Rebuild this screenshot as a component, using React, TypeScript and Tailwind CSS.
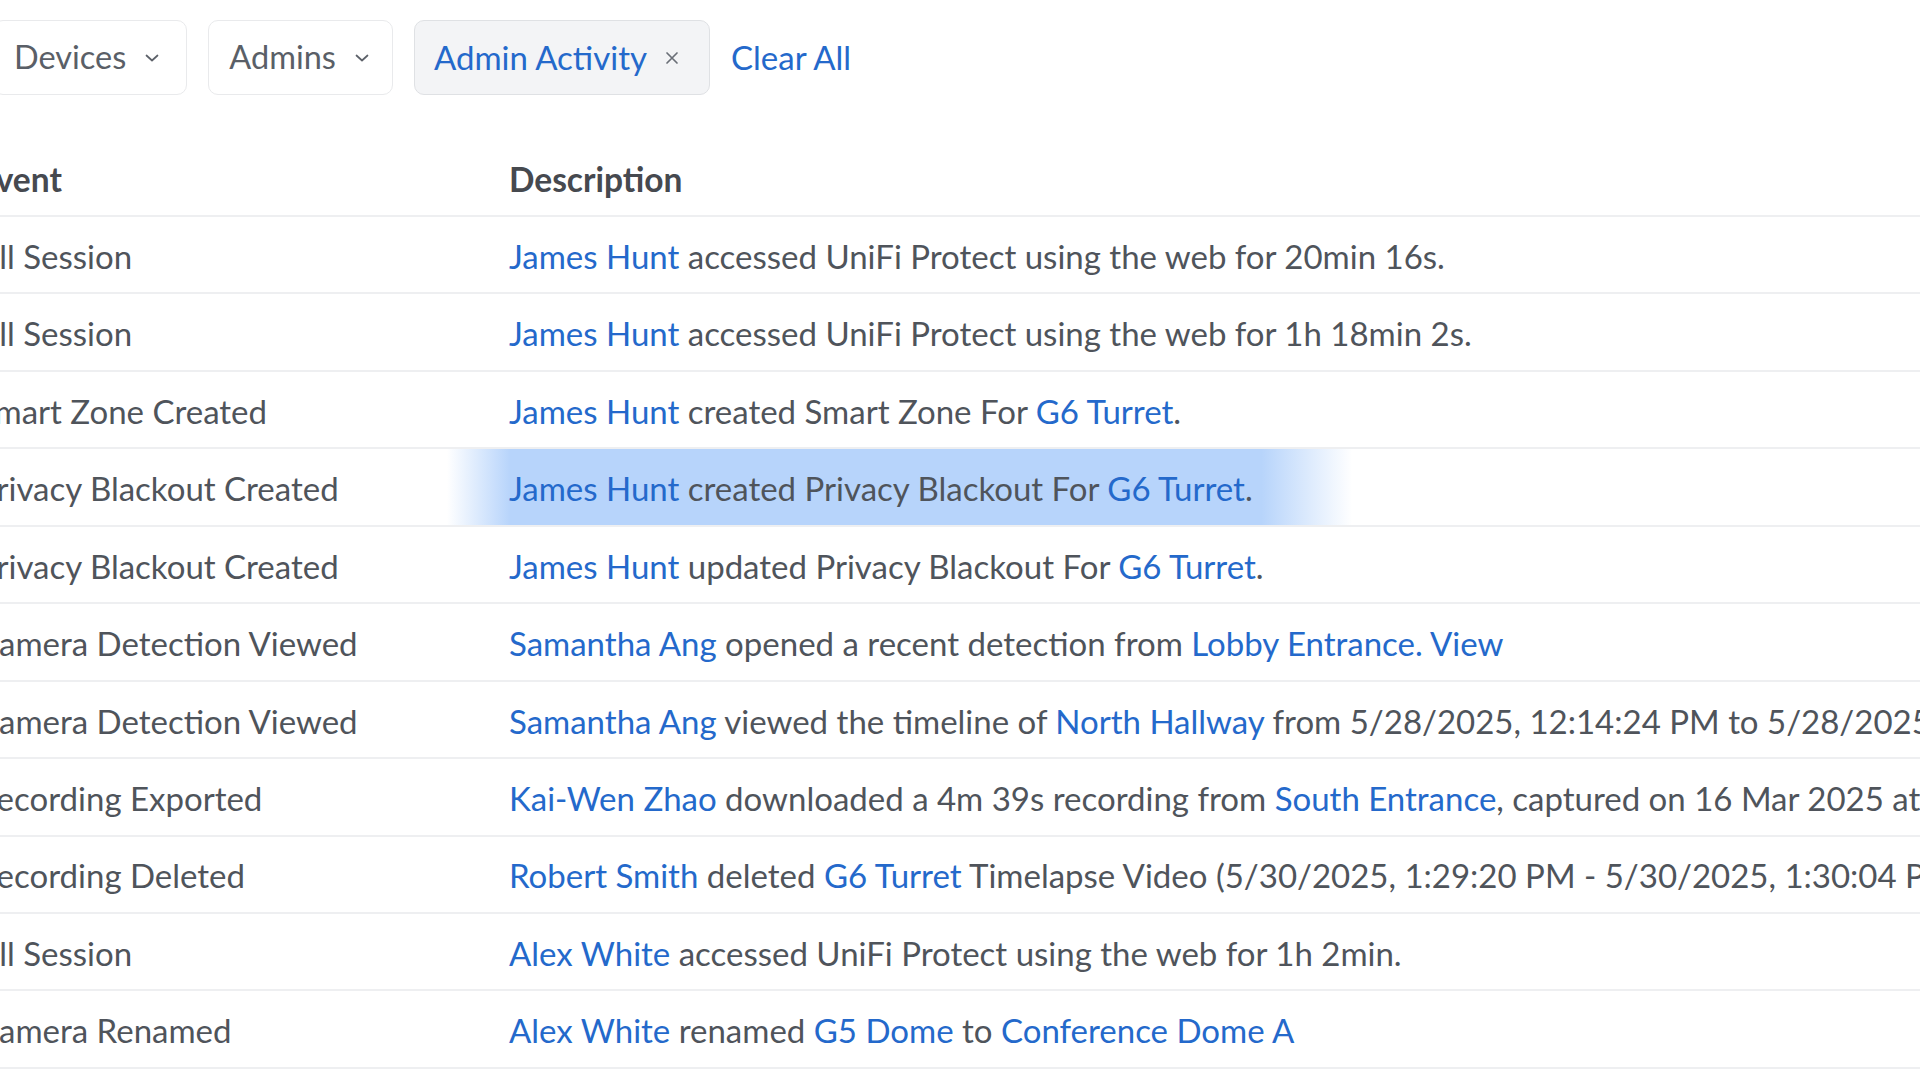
import React from "react";

type Part = { t: string; link?: boolean };
type Row = { event: string; desc: Part[]; highlight?: boolean };

const rows: Row[] = [
  { event: "All Session", desc: [{ t: "James Hunt", link: true }, { t: " accessed UniFi Protect using the web for 20min 16s." }] },
  { event: "All Session", desc: [{ t: "James Hunt", link: true }, { t: " accessed UniFi Protect using the web for 1h 18min 2s." }] },
  { event: "Smart Zone Created", desc: [{ t: "James Hunt", link: true }, { t: " created Smart Zone For " }, { t: "G6 Turret", link: true }, { t: "." }] },
  { event: "Privacy Blackout Created", highlight: true, desc: [{ t: "James Hunt", link: true }, { t: " created Privacy Blackout For " }, { t: "G6 Turret", link: true }, { t: "." }] },
  { event: "Privacy Blackout Created", desc: [{ t: "James Hunt", link: true }, { t: " updated Privacy Blackout For " }, { t: "G6 Turret", link: true }, { t: "." }] },
  { event: "Camera Detection Viewed", desc: [{ t: "Samantha Ang", link: true }, { t: " opened a recent detection from " }, { t: "Lobby Entrance. View", link: true }] },
  { event: "Camera Detection Viewed", desc: [{ t: "Samantha Ang", link: true }, { t: " viewed the timeline of " }, { t: "North Hallway", link: true }, { t: " from 5/28/2025, 12:14:24 PM to 5/28/2025, 12:20:00 PM." }] },
  { event: "Recording Exported", desc: [{ t: "Kai-Wen Zhao", link: true }, { t: " downloaded a 4m 39s recording from " }, { t: "South Entrance", link: true }, { t: ", captured on 16 Mar 2025 at 10:42 AM." }] },
  { event: "Recording Deleted", desc: [{ t: "Robert Smith", link: true }, { t: " deleted " }, { t: "G6 Turret", link: true }, { t: " Timelapse Video (5/30/2025, 1:29:20 PM - 5/30/2025, 1:30:04 PM)." }] },
  { event: "All Session", desc: [{ t: "Alex White", link: true }, { t: " accessed UniFi Protect using the web for 1h 2min." }] },
  { event: "Camera Renamed", desc: [{ t: "Alex White", link: true }, { t: " renamed " }, { t: "G5 Dome", link: true }, { t: " to " }, { t: "Conference Dome A", link: true }] },
];

function Chevron() {
  return (
    <svg width="16" height="10" viewBox="0 0 16 10" fill="none" className="shrink-0">
      <path d="M2.5 2.5l5.5 5 5.5-5" stroke="#5c6169" strokeWidth="1.7" strokeLinecap="round" strokeLinejoin="round" />
    </svg>
  );
}

function FilterButton({ label, pr }: { label: string; pr: string }) {
  return (
    <button className={`flex items-center gap-[18px] h-[75px] pl-[20px] ${pr} rounded-[10px] border border-[#e9eaec] bg-white text-[32.5px] text-[#5a5f67]`}>
      {label}
      <Chevron />
    </button>
  );
}

export default function App() {
  return (
    <div className="w-[1920px] h-[1080px] overflow-hidden bg-white font-['Lato',sans-serif] antialiased">
      {/* filters */}
      <div className="flex items-center gap-[21px] pt-[20px] ml-[-7px]">
        <FilterButton label="Devices" pr="pr-[26px]" />
        <FilterButton label="Admins" pr="pr-[22px]" />
        <div className="flex items-center gap-[18px] h-[75px] pl-[19px] pr-[30px] rounded-[10px] border border-[#dfe1e4] bg-[#f3f4f6] text-[33px] text-[#2469cb]">
          Admin Activity
          <svg width="14" height="14" viewBox="0 0 14 14" className="shrink-0">
            <path d="M2 2l10 10M12 2L2 12" stroke="#6a6f77" strokeWidth="1.7" strokeLinecap="round" />
          </svg>
        </div>
        <span className="text-[33px] text-[#2469cb]">Clear All</span>
      </div>

      {/* table */}
      <div className="mt-[45px] ml-[-23px] w-[1980px]">
        <div className="flex items-center h-[77px] pt-[4px] border-b-2 border-[#eeeff1] text-[33.5px] font-bold text-[#46494f]">
          <div className="w-[532px] shrink-0">Event</div>
          <div>Description</div>
        </div>
        {rows.map((r, i) => (
          <div key={i} className="flex items-stretch h-[77.45px] border-b-2 border-[#eeeff1] text-[33px] text-[#4f545b] whitespace-nowrap">
            <div className="w-[532px] shrink-0 flex items-center pt-[4px]">{r.event}</div>
            <div className="relative flex-1 flex items-center pt-[4px]">
              {r.highlight && (
                <div className="absolute top-0 bottom-0 left-[-62px] w-[905px] bg-[linear-gradient(90deg,rgba(181,210,251,0)_0%,#b7d4fb_7%,#b7d4fb_90%,rgba(181,210,251,0)_100%)]" />
              )}
              <span className="relative">
                {r.desc.map((p, j) => (
                  <span key={j} className={p.link ? "text-[#2469cb]" : undefined}>{p.t}</span>
                ))}
              </span>
            </div>
          </div>
        ))}
      </div>
    </div>
  );
}
